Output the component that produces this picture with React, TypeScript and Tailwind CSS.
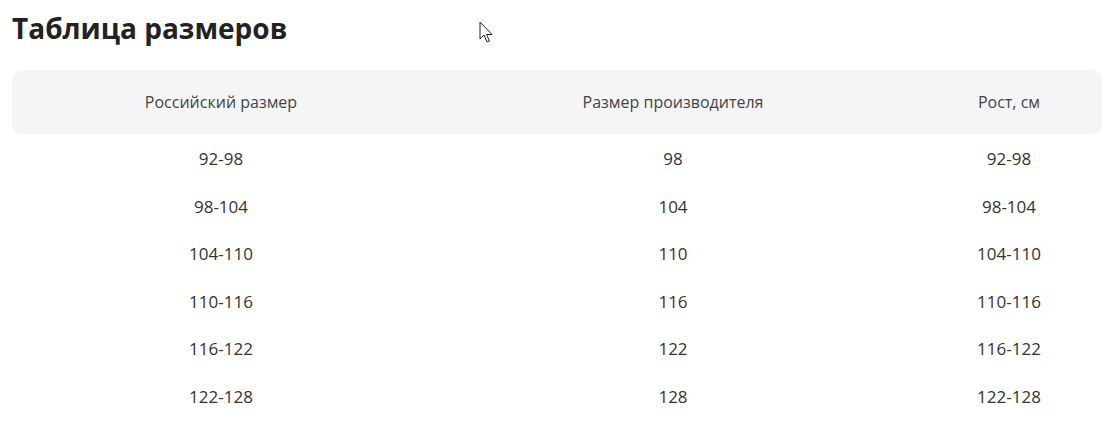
const rows = [
  ["92-98", "98", "92-98"],
  ["98-104", "104", "98-104"],
  ["104-110", "110", "104-110"],
  ["110-116", "116", "110-116"],
  ["116-122", "122", "116-122"],
  ["122-128", "128", "122-128"],
];

const App = () => {
  return (
    <main
      className="relative w-[1105px] h-[442px] bg-white text-[#333] overflow-hidden"
      style={{ fontFamily: '"Open Sans", "Noto Sans", sans-serif' }}
    >
      <h1 className="pl-[12px] pt-[8px] text-[28px] leading-[40px] font-bold text-[#222]">
        Таблица размеров
      </h1>
      <div className="ml-[12px] mt-[22px] w-[1090px]">
        <div className="flex h-[64px] items-center rounded-[10px] bg-[#f5f5f7] text-[16px] text-[#444]">
          <div className="w-[418px] text-center">Российский размер</div>
          <div className="w-[486px] text-center">Размер производителя</div>
          <div className="w-[186px] text-center">Рост, см</div>
        </div>
        <div className="pt-[1px]">
          {rows.map((r) => (
            <div key={r[0]} className="flex h-[47.6px] items-center text-[17px]">
              <div className="w-[418px] text-center">{r[0]}</div>
              <div className="w-[486px] text-center">{r[1]}</div>
              <div className="w-[186px] text-center">{r[2]}</div>
            </div>
          ))}
        </div>
      </div>
      {/* mouse cursor */}
      <svg
        className="absolute left-[479px] top-[21px]"
        width="16"
        height="25"
        viewBox="0 0 16 25"
      >
        <path
          d="M1 1 L1 18 L5 14 L8 21 L10.5 20 L7.5 13.5 L13 13.5 Z"
          fill="white"
          stroke="#222"
          strokeWidth="1"
          strokeLinejoin="round"
        />
      </svg>
    </main>
  );
};

export default App;
